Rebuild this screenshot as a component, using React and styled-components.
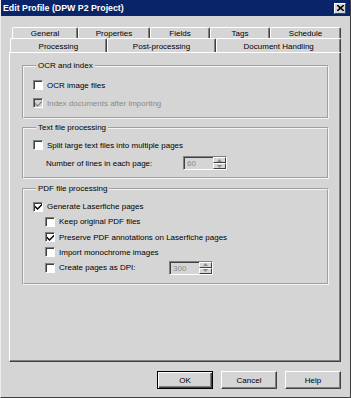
import React from 'react';
import styled, { createGlobalStyle } from 'styled-components';

const GlobalStyle = createGlobalStyle`
  html, body {
    margin: 0;
    padding: 0;
    background: #d5d5d5;
  }
  * {
    box-sizing: border-box;
  }
`;

const Window = styled.div`
  width: 351px;
  height: 398px;
  display: flex;
  flex-direction: column;
  background: #d5d5d5;
  border-left: 1px solid #ececec;
  border-bottom: 1px solid #404040;
  border-right: 1px solid #404040;
  font-family: 'Liberation Sans', Arial, sans-serif;
  font-size: 8px;
  color: #000;
  overflow: hidden;
`;

const TitleBar = styled.div`
  height: 16px;
  margin-left: -1px;
  margin-right: -1px;
  background: #0a246a;
  display: flex;
  align-items: center;
  justify-content: space-between;
  padding: 0 5px 0 3px;
`;

const Title = styled.span`
  color: #fff;
  font-weight: bold;
  font-size: 8.8px;
  letter-spacing: 0;
`;

const CloseButton = styled.div`
  width: 12px;
  height: 11px;
  background: #d5d5d5;
  border-top: 1px solid #fff;
  border-left: 1px solid #fff;
  border-right: 1px solid #404040;
  border-bottom: 1px solid #404040;
  display: flex;
  align-items: center;
  justify-content: center;
`;

const Content = styled.div`
  flex: 1;
  display: flex;
  flex-direction: column;
  padding: 11px 9px 0 8px;
`;

const TabRow = styled.div`
  display: flex;
  height: ${({ h }) => h}px;
  padding-left: ${({ inset }) => inset}px;
`;

const Tab = styled.div`
  width: ${({ w }) => w}px;
  height: 100%;
  border-top: 1px solid #fff;
  border-left: 1px solid #fff;
  border-right: 1px solid #404040;
  box-shadow: inset -1px 0 0 #808080;
  border-radius: 2px 2px 0 0;
  display: flex;
  align-items: center;
  justify-content: center;
  padding-top: ${({ up }) => (up ? 0 : 1)}px;
  background: #d5d5d5;
  position: relative;
  z-index: ${({ active }) => (active ? 2 : 1)};
  margin-bottom: ${({ active }) => (active ? -1 : 0)}px;
`;

const Panel = styled.div`
  height: 310px;
  border-top: 1px solid #fff;
  border-left: 1px solid #fff;
  border-right: 1px solid #404040;
  border-bottom: 1px solid #404040;
  box-shadow: inset -1px -1px 0 #808080;
  padding: 8px 11px 0 12px;
  display: flex;
  flex-direction: column;
  gap: ${({ gap }) => gap}px;
`;

const GroupBox = styled.fieldset`
  margin: 0 0 ${({ mb }) => mb}px 0;
  padding: ${({ pt }) => pt}px 0 0 9px;
  height: ${({ h }) => h}px;
  border: 2px groove #f4f4f4;
  min-width: 0;
`;

const Legend = styled.legend`
  padding: 0 2px;
  margin-left: 3px;
  line-height: 10px;
  font-size: 8px;
`;

const Row = styled.div`
  display: flex;
  align-items: center;
  height: ${({ h }) => h}px;
  padding-left: ${({ indent }) => indent || 0}px;
  color: ${({ disabled }) => (disabled ? '#8a8a8a' : '#000')};
`;

const Box = styled.span`
  width: 10px;
  height: 10px;
  flex: none;
  margin-right: 4px;
  background: ${({ disabled }) => (disabled ? '#d5d5d5' : '#fff')};
  border-top: 1px solid #808080;
  border-left: 1px solid #808080;
  border-right: 1px solid #fff;
  border-bottom: 1px solid #fff;
  box-shadow: inset 1px 1px 0 #404040;
  display: flex;
  align-items: center;
  justify-content: center;
`;

const Label = styled.span`
  white-space: nowrap;
  width: ${({ w }) => (w ? `${w}px` : 'auto')};
  flex: none;
`;

const Spin = styled.div`
  width: 44px;
  height: 14px;
  display: flex;
  border-top: 1px solid #808080;
  border-left: 1px solid #808080;
  border-right: 1px solid #fff;
  border-bottom: 1px solid #fff;
  box-shadow: inset 1px 1px 0 #404040;
  background: #d5d5d5;
`;

const SpinValue = styled.span`
  flex: 1;
  color: #8a8a8a;
  padding: 1px 0 0 3px;
  line-height: 11px;
`;

const SpinButtons = styled.div`
  width: 13px;
  display: flex;
  flex-direction: column;
`;

const SpinButton = styled.div`
  flex: 1;
  border-top: 1px solid #fff;
  border-left: 1px solid #fff;
  border-right: 1px solid #404040;
  border-bottom: 1px solid #404040;
  display: flex;
  align-items: center;
  justify-content: center;
`;

const ButtonBar = styled.div`
  display: flex;
  justify-content: flex-end;
  gap: 8px;
  margin-top: 9px;
`;

const Button = styled.div`
  width: 56px;
  height: 18px;
  display: flex;
  align-items: center;
  justify-content: center;
  border-top: 1px solid ${({ def }) => (def ? '#000' : '#fff')};
  border-left: 1px solid ${({ def }) => (def ? '#000' : '#fff')};
  border-right: 1px solid ${({ def }) => (def ? '#000' : '#404040')};
  border-bottom: 1px solid ${({ def }) => (def ? '#000' : '#404040')};
  box-shadow: ${({ def }) =>
    def
      ? 'inset 1px 1px 0 #fff, inset -1px -1px 0 #404040, inset -2px -2px 0 #808080'
      : 'inset -1px -1px 0 #808080'};
`;

const Check = ({ color = '#000' }) => (
  <svg width="7" height="7" viewBox="0 0 7 7">
    <path d="M0 2.5 L2.5 5 L7 0.5 L7 2.5 L2.5 7 L0 4.5 Z" fill={color} />
  </svg>
);

const Arrow = ({ down }) => (
  <svg width="5" height="3" viewBox="0 0 5 3">
    <path d={down ? 'M0 0 H5 L2.5 3 Z' : 'M0 3 H5 L2.5 0 Z'} fill="#8a8a8a" />
  </svg>
);

const CheckItem = ({ label, checked, disabled, indent, h }) => (
  <Row h={h} indent={indent} disabled={disabled}>
    <Box disabled={disabled}>{checked && <Check color={disabled ? '#8a8a8a' : '#000'} />}</Box>
    <Label>{label}</Label>
  </Row>
);

const SpinBox = ({ value }) => (
  <Spin>
    <SpinValue>{value}</SpinValue>
    <SpinButtons>
      <SpinButton>
        <Arrow />
      </SpinButton>
      <SpinButton>
        <Arrow down />
      </SpinButton>
    </SpinButtons>
  </Spin>
);

const backTabs = [
  { name: 'General', w: 66 },
  { name: 'Properties', w: 72 },
  { name: 'Fields', w: 60 },
  { name: 'Tags', w: 60 },
  { name: 'Schedule', w: 71 },
];

const frontTabs = [
  { name: 'Processing', w: 97, active: true },
  { name: 'Post-processing', w: 110 },
  { name: 'Document Handling', w: 125 },
];

export default function App() {
  return (
    <>
      <GlobalStyle />
      <Window>
        <TitleBar>
          <Title>Edit Profile (DPW P2 Project)</Title>
          <CloseButton>
            <svg width="7" height="6" viewBox="0 0 7 6">
              <path d="M0 0 L7 6 M7 0 L0 6" stroke="#000" strokeWidth="1.6" />
            </svg>
          </CloseButton>
        </TitleBar>
        <Content>
          <TabRow h={11} inset={3}>
            {backTabs.map((t) => (
              <Tab key={t.name} w={t.w} up>
                {t.name}
              </Tab>
            ))}
          </TabRow>
          <TabRow h={14} inset={1}>
            {frontTabs.map((t) => (
              <Tab key={t.name} w={t.w} active={t.active}>
                {t.name}
              </Tab>
            ))}
          </TabRow>
          <Panel>
            <GroupBox h={58} pt={5} mb={4}>
              <Legend>OCR and index</Legend>
              <CheckItem h={18} label="OCR image files" />
              <CheckItem h={18} label="Index documents after importing" checked disabled />
            </GroupBox>
            <GroupBox h={56} pt={3} mb={5}>
              <Legend>Text file processing</Legend>
              <CheckItem h={18} label="Split large text files into multiple pages" />
              <Row h={18} indent={13}>
                <Label w={137}>Number of lines in each page:</Label>
                <SpinBox value="60" />
              </Row>
            </GroupBox>
            <GroupBox h={101} pt={5} mb={0}>
              <Legend>PDF file processing</Legend>
              <CheckItem h={15} label="Generate Laserfiche pages" checked />
              <CheckItem h={15.5} indent={12} label="Keep original PDF files" />
              <CheckItem h={15} indent={12} label="Preserve PDF annotations on Laserfiche pages" checked />
              <CheckItem h={15.5} indent={12} label="Import monochrome images" />
              <Row h={15} indent={12}>
                <Box />
                <Label w={110}>Create pages as DPI:</Label>
                <SpinBox value="300" />
              </Row>
            </GroupBox>
          </Panel>
          <ButtonBar>
            <Button def>OK</Button>
            <Button>Cancel</Button>
            <Button>Help</Button>
          </ButtonBar>
        </Content>
      </Window>
    </>
  );
}
